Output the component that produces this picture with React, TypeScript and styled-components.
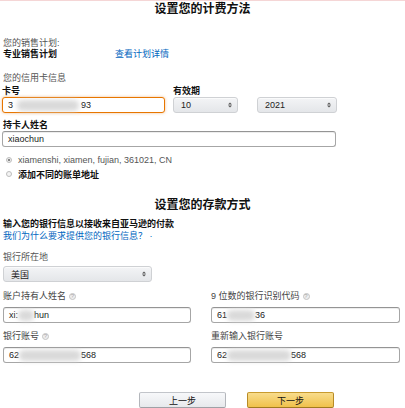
import React, { FC } from "react";
import styled, { createGlobalStyle } from "styled-components";

const GlobalStyle = createGlobalStyle`
  html, body {
    margin: 0;
    padding: 0;
    background: #fff;
  }
  body {
    font-family: "Liberation Sans", "Noto Sans CJK SC", sans-serif;
    color: #333;
  }
`;

const Root = styled.div`
  width: 405px;
  height: 408px;
  overflow: hidden;
  border-top: 1px solid #f5d6d6;
  box-sizing: border-box;
  padding: 0 3px;
`;

const Title = styled.h1<{ $top: number }>`
  margin: ${({ $top }) => $top}px 0 0;
  font-family: "Noto Sans CJK SC", sans-serif;
  font-size: 12px;
  line-height: 14px;
  font-weight: 700;
  color: #111;
  text-align: center;
`;

const Text = styled.div<{ $top?: number; $bold?: boolean; $gray?: boolean; $lh?: number }>`
  margin-top: ${({ $top = 0 }) => $top}px;
  font-size: 9px;
  line-height: ${({ $lh = 11 }) => $lh}px;
  font-weight: ${({ $bold }) => ($bold ? 700 : 400)};
  color: ${({ $bold, $gray }) => ($bold ? "#111" : $gray ? "#555" : "#333")};
  white-space: nowrap;
`;

const Link = styled.a`
  color: #0066c0;
  text-decoration: none;
  font-size: 9px;
  line-height: 12px;
  display: block;
  white-space: nowrap;
`;

const PlanGrid = styled.div`
  margin-top: 23px;
  display: grid;
  grid-template-columns: 112px auto;
  align-items: end;
`;

const CardGrid = styled.div`
  margin-top: 2px;
  margin-left: -1px;
  display: grid;
  grid-template-columns: 163px 65px 91px;
  column-gap: 8px;
`;

const Box = styled.div<{ $focus?: boolean; $width?: number }>`
  box-sizing: border-box;
  height: 16px;
  width: ${({ $width }) => ($width ? `${$width}px` : "100%")};
  display: flex;
  align-items: center;
  padding: 0 5px;
  font-size: 9px;
  color: #222;
  background: #fff;
  border: 1px solid ${({ $focus }) => ($focus ? "#e77600" : "#a6a6a6")};
  border-top-color: ${({ $focus }) => ($focus ? "#e77600" : "#949494")};
  border-radius: 3px;
  box-shadow: ${({ $focus }) =>
    $focus ? "0 0 3px rgba(228, 121, 17, 0.5)" : "0 1px 0 rgba(255,255,255,.5), 0 1px 0 rgba(0,0,0,.07) inset"};
  white-space: nowrap;
`;

const Blur = styled.span<{ $w: number }>`
  display: inline-block;
  width: ${({ $w }) => $w}px;
  height: 11px;
  background: #d9d9d9;
  border-radius: 5px;
  filter: blur(2.5px);
  flex-shrink: 0;
`;

const SelectBox = styled.div<{ $width?: number; $end?: boolean }>`
  box-sizing: border-box;
  height: 16px;
  width: ${({ $width }) => ($width ? `${$width}px` : "100%")};
  justify-self: ${({ $end }) => ($end ? "end" : "start")};
  display: flex;
  align-items: center;
  justify-content: space-between;
  padding: 0 5px 0 7px;
  font-size: 9px;
  color: #222;
  background: linear-gradient(#f3f4f6, #e4e6e9);
  border: 1px solid #cfd1d4;
  border-radius: 3px;
  box-shadow: 0 1px 0 rgba(255, 255, 255, 0.6) inset;
`;

const Arrows: FC = () => (
  <svg width="4" height="6" viewBox="0 0 4 6">
    <path d="M0 2.4 L2 0.4 L4 2.4 Z M0 3.6 L2 5.6 L4 3.6 Z" fill="#555" />
  </svg>
);

const Select: FC<{ value: string; width?: number; end?: boolean }> = ({ value, width, end }) => (
  <SelectBox $width={width} $end={end}>
    <span>{value}</span>
    <Arrows />
  </SelectBox>
);

const RadioRow = styled.label<{ $top?: number }>`
  margin-top: ${({ $top = 0 }) => $top}px;
  height: 14px;
  display: flex;
  align-items: center;
  gap: 6px;
  padding-left: 1px;
  font-size: 9px;
  color: #555;
  white-space: nowrap;
`;

const RadioDot = styled.span<{ $checked?: boolean }>`
  box-sizing: border-box;
  width: 6px;
  height: 6px;
  border-radius: 50%;
  border: 1px solid #bdbdbd;
  background: ${({ $checked }) => ($checked ? "radial-gradient(#888 0 35%, #eee 45%)" : "#f4f4f4")};
  margin-left: 2px;
`;

const BoldSpan = styled.span`
  font-weight: 700;
  color: #111;
`;

const TwoCol = styled.div`
  display: grid;
  grid-template-columns: 188px 189px;
  column-gap: 20px;
`;

const FieldLabel = styled.div<{ $top: number }>`
  margin-top: ${({ $top }) => $top}px;
  margin-bottom: 5px;
  font-size: 9px;
  line-height: 12px;
  color: #444;
  display: flex;
  align-items: center;
  gap: 3px;
  white-space: nowrap;
`;

const Info = styled.span`
  box-sizing: border-box;
  width: 7px;
  height: 7px;
  border-radius: 50%;
  border: 1px solid #c4c4c4;
  background: #eee;
  display: inline-flex;
  align-items: center;
  justify-content: center;
  font-size: 6px;
  color: #aaa;
  line-height: 1;
`;

const Buttons = styled.div`
  margin-top: 29px;
  padding-left: 136px;
  display: flex;
  gap: 21px;
`;

const Button = styled.button<{ $primary?: boolean }>`
  box-sizing: border-box;
  width: 87px;
  height: 16px;
  padding: 0;
  font-family: "Noto Sans CJK SC", sans-serif;
  font-size: 9px;
  color: #111;
  border-radius: 2px;
  border: 1px solid;
  border-color: ${({ $primary }) => ($primary ? "#c89b2f #b78b26 #a27a1f" : "#c2c5ca #b3b6bb #9ea1a6")};
  background: ${({ $primary }) =>
    $primary ? "linear-gradient(#f8dc8c, #f0c14b)" : "linear-gradient(#f7f8fa, #e7e9ec)"};
`;

const App: FC = () => {
  return (
    <>
      <GlobalStyle />
      <Root>
        <Title $top={0}>设置您的计费方法</Title>

        <PlanGrid>
          <div>
            <Text $gray>您的销售计划:</Text>
            <Text $bold>专业销售计划</Text>
          </div>
          <Link href="#">查看计划详情</Link>
        </PlanGrid>

        <Text $top={13} $gray>您的信用卡信息</Text>
        <CardGrid>
          <Text $bold>卡号</Text>
          <Text $bold>有效期</Text>
          <span />
          <Box $focus>
            <span>3</span>
            <Blur $w={62} style={{ marginLeft: 4 }} />
            <span style={{ marginLeft: 2 }}>93</span>
          </Box>
          <Select value="10" />
          <Select value="2021" width={80} end />
        </CardGrid>

        <Text $top={7} $bold>持卡人姓名</Text>
        <Box $width={334} style={{ marginLeft: -1 }}>xiaochun</Box>

        <RadioRow $top={6}>
          <RadioDot $checked />
          xiamenshi, xiamen, fujian, 361021, CN
        </RadioRow>
        <RadioRow>
          <RadioDot />
          <BoldSpan>添加不同的账单地址</BoldSpan>
        </RadioRow>

        <Title $top={16}>设置您的存款方式</Title>

        <Text $top={7} $bold $lh={12}>输入您的银行信息以接收来自亚马逊的付款</Text>
        <Link href="#">我们为什么要求提供您的银行信息？ ·</Link>

        <Text $top={9} $lh={12} $gray>银行所在地</Text>
        <SelectBox $width={149} style={{ marginTop: 3 }}>
          <span>美国</span>
          <Arrows />
        </SelectBox>

        <TwoCol>
          <div>
            <FieldLabel $top={8}>
              账户持有人姓名 <Info>?</Info>
            </FieldLabel>
            <Box>
              <span>xi:</span>
              <Blur $w={16} />
              <span>hun</span>
            </Box>
          </div>
          <div>
            <FieldLabel $top={8}>
              9 位数的银行识别代码 <Info>?</Info>
            </FieldLabel>
            <Box>
              <span>61</span>
              <Blur $w={28} />
              <span>36</span>
            </Box>
          </div>
          <div>
            <FieldLabel $top={7}>
              银行账号 <Info>?</Info>
            </FieldLabel>
            <Box>
              <span>62</span>
              <Blur $w={62} />
              <span>568</span>
            </Box>
          </div>
          <div>
            <FieldLabel $top={7}>重新输入银行账号</FieldLabel>
            <Box>
              <span>62</span>
              <Blur $w={64} />
              <span>568</span>
            </Box>
          </div>
        </TwoCol>

        <Buttons>
          <Button>上一步</Button>
          <Button $primary>下一步</Button>
        </Buttons>
      </Root>
    </>
  );
};

export default App;
